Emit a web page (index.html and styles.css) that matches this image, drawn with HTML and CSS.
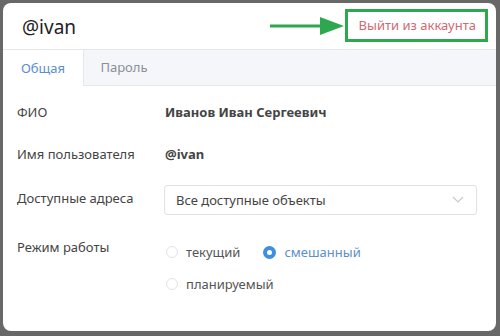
FILE: index.html
```html
<!DOCTYPE html>
<html lang="ru">
<head>
    <meta charset="UTF-8">
    <title>Профиль</title>
    <link rel="stylesheet" href="styles.css">
</head>
<body>

<div class="dialog">
    <div class="header">
        <div class="title">@ivan</div>
        <div class="hint">
            <svg class="arrow" width="76" height="20" viewBox="0 0 76 20">
                <line x1="2" y1="10" x2="56" y2="10" stroke="#2ea84e" stroke-width="3"/>
                <polygon points="52,1 76,10 52,19" fill="#2ea84e"/>
            </svg>
            <div class="logout">Выйти из аккаунта</div>
        </div>
    </div>

    <div class="tabs">
        <div class="tab active">Общая</div>
        <div class="tab">Пароль</div>
    </div>

    <div class="form">
        <div class="row">
            <div class="label">ФИО</div>
            <div class="value">Иванов Иван Сергеевич</div>
        </div>
        <div class="row">
            <div class="label">Имя пользователя</div>
            <div class="value">@ivan</div>
        </div>
        <div class="row row-select">
            <div class="label">Доступные адреса</div>
            <div class="select">
                <span>Все доступные объекты</span>
                <svg width="12" height="8" viewBox="0 0 12 8">
                    <polyline points="1,1 6,6 11,1" fill="none" stroke="#c4c8cf" stroke-width="1.2"/>
                </svg>
            </div>
        </div>
        <div class="row row-radio">
            <div class="label">Режим работы</div>
            <div class="radios">
                <div class="radio"><span class="dot"></span>текущий</div>
                <div class="radio checked"><span class="dot"></span>смешанный</div>
                <div class="radio"><span class="dot"></span>планируемый</div>
            </div>
        </div>
    </div>
</div>

</body>
</html>
```

FILE: styles.css
```css
body {
    margin: 0;
    background-color: #686868;
    font-family: "Noto Sans", "Open Sans", sans-serif;
    font-size: 13px;
    color: #333;
}
.dialog {
    margin: 3px 0 0 3px;
    width: 493px;
    height: 328px;
    background-color: #fff;
    border-radius: 8px;
    overflow: hidden;
}
.header {
    height: 46px;
    display: flex;
    align-items: center;
    justify-content: space-between;
    padding: 0 8px 0 19px;
    border-bottom: 1px solid #e4e7ec;
}
.title {
    font-size: 19px;
    color: #222;
    margin-top: 1px;
}
.hint {
    display: flex;
    align-items: center;
    margin-top: -1px;
}
.arrow {
    margin-right: 1px;
}
.logout {
    border: 3px solid #2ea84e;
    padding: 4px 9px 5px 11px;
    color: #d06a72;
    font-size: 13px;
}
.tabs {
    display: flex;
    height: 35px;
    background-color: #f4f6f9;
    border-bottom: 1px solid #e4e7ec;
}
.tab {
    width: 80px;
    display: flex;
    align-items: center;
    justify-content: center;
    color: #8a8f98;
    padding-bottom: 1px;
}
.tab.active {
    background-color: #fff;
    color: #5b8fc7;
    border-right: 1px solid #e4e7ec;
    margin-bottom: -1px;
}
.form {
    padding: 17px 19px 0 14px;
}
.row {
    display: flex;
    height: 42px;
}
.label {
    width: 148px;
    color: #444;
}
.value {
    font-weight: bold;
    color: #444;
}
.row-select {
    height: 50px;
    margin-top: -1px;
}
.row-select .label {
    padding-top: 3px;
}
.select {
    margin-top: -1px;
    width: 290px;
    height: 28px;
    border: 1px solid #dfe2e6;
    border-radius: 3px;
    display: flex;
    align-items: center;
    justify-content: space-between;
    padding: 0 12px 0 11px;
    color: #444;
}
.row-radio .label {
    padding-top: 2px;
}
.radios {
    display: flex;
    flex-wrap: wrap;
    width: 240px;
    padding-top: 7px;
    row-gap: 14px;
}
.radio {
    display: flex;
    align-items: center;
    color: #555;
    margin-right: 22px;
}
.dot {
    width: 12px;
    height: 12px;
    border: 1px solid #e1e3e7;
    border-radius: 50%;
    margin: 0 8px 0 1px;
    box-sizing: border-box;
}
.radio.checked {
    color: #5b8fc7;
}
.radio.checked .dot {
    border: 4px solid #3d8fe0;
    background-color: #fff;
    width: 13px;
    height: 13px;
}
```
